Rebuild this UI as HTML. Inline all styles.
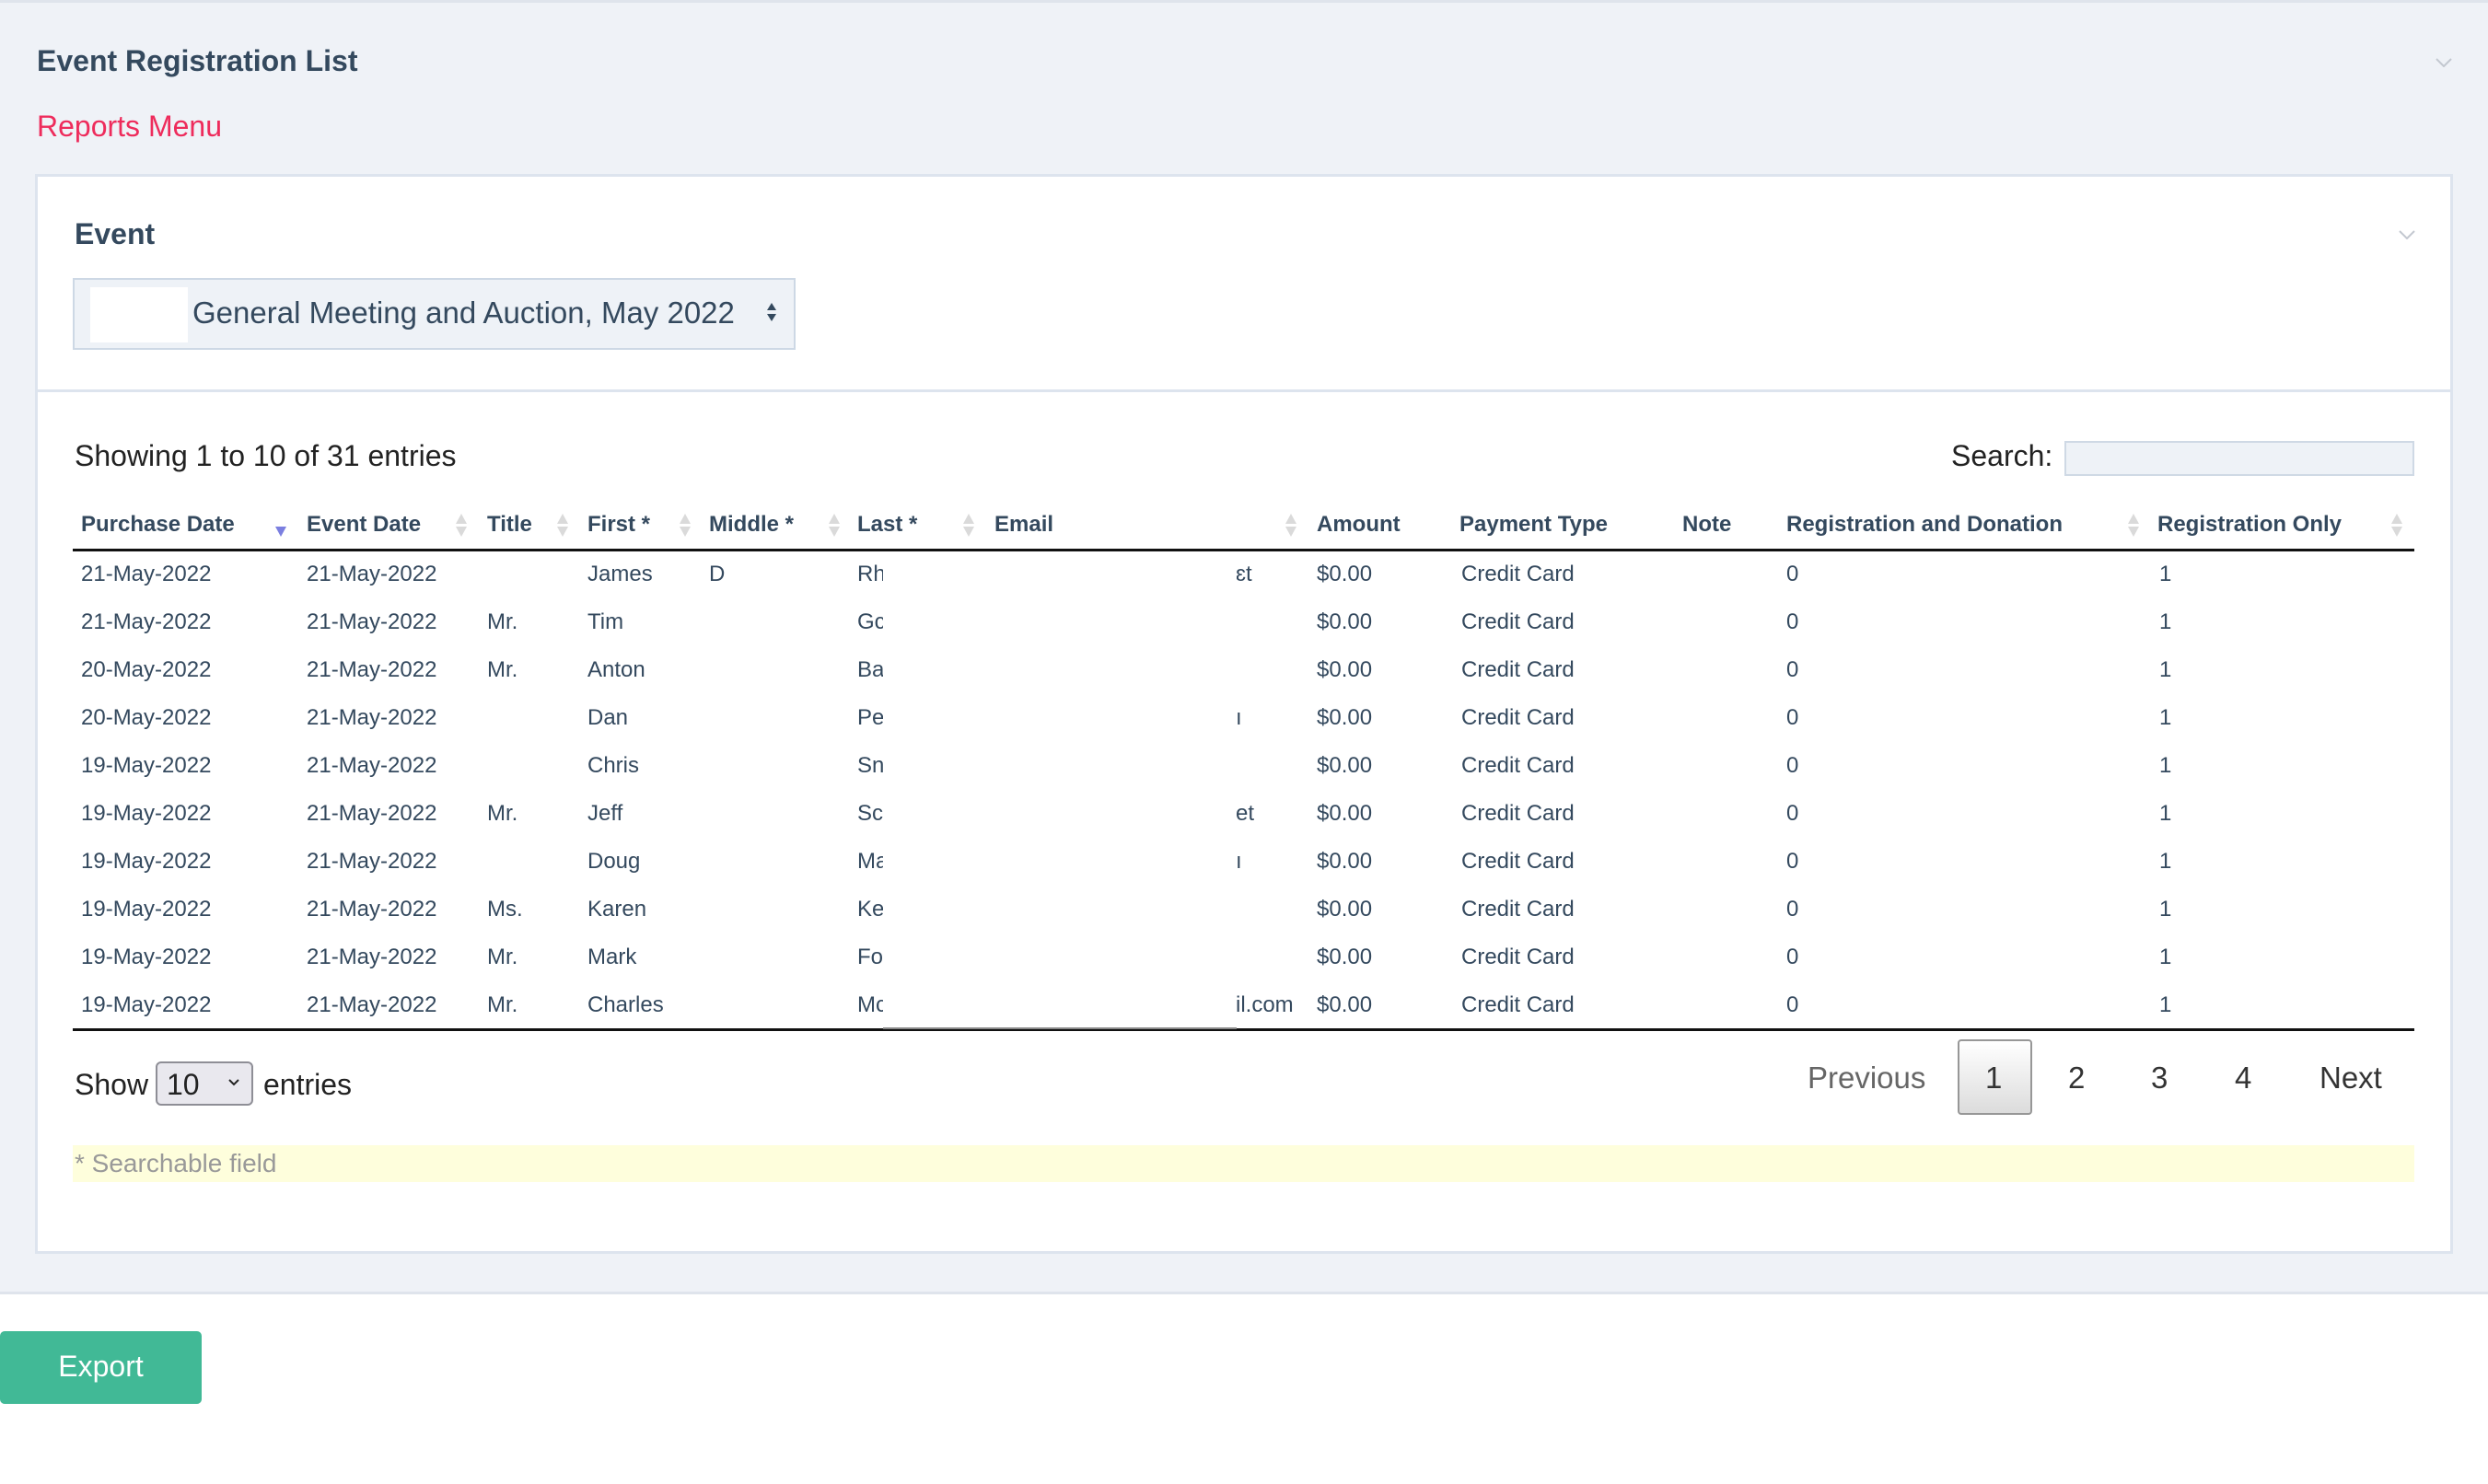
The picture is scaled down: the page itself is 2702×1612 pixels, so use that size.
<!DOCTYPE html>
<html><head><meta charset="utf-8"><style>
*{margin:0;padding:0;box-sizing:border-box}
body{width:2702px;height:1612px;background:#fff;font-family:"Liberation Sans",sans-serif;position:relative;overflow:hidden;color:#34495e}
.a{position:absolute;white-space:nowrap}
.bg{position:absolute;left:0;top:0;width:2702px;height:1406px;background:#eff2f7;border-top:3px solid #dfe4ec;border-bottom:3px solid #dfe4ec}
.card{position:absolute;left:38px;top:189px;width:2626px;height:1173px;background:#fff;border:3px solid #dde4ee}
.th{position:absolute;top:556px;font-weight:bold;font-size:24px;color:#34495e}
.td{position:absolute;font-size:24px;color:#34495e}
.sort{position:absolute;top:556px;width:14px;height:30px}
.chev{position:absolute;width:18px;height:10px}
</style></head><body>
<div class="bg"></div>
<div class="a" style="left:40px;top:48px;font-size:32px;font-weight:bold;color:#34495e">Event Registration List</div>
<svg class="chev" style="left:2645px;top:63px" viewBox="0 0 18 10"><path d="M1 1 L9 9 L17 1" fill="none" stroke="#c3c8d0" stroke-width="2"/></svg>
<div class="a" style="left:40px;top:119px;font-size:32px;color:#ee2c5c">Reports Menu</div>
<div class="card"></div>
<div class="a" style="left:81px;top:236px;font-size:32px;font-weight:bold;color:#34495e">Event</div>
<svg class="chev" style="left:2605px;top:250px" viewBox="0 0 18 10"><path d="M1 1 L9 9 L17 1" fill="none" stroke="#c3c8d0" stroke-width="2"/></svg>
<div class="a" style="left:79px;top:302px;width:785px;height:78px;background:#eef2f7;border:2px solid #cdd8e5"></div>
<div class="a" style="left:98px;top:312px;width:106px;height:60px;background:#fff"></div>
<div class="a" style="left:209px;top:321px;font-size:33px;color:#34495e">General Meeting and Auction, May 2022</div>
<svg class="a" style="left:832px;top:327px" width="12" height="24" viewBox="0 0 12 24"><path d="M6 2 L11 10 L1 10Z M6 22 L11 14 L1 14Z" fill="#34495e"/></svg>
<div class="a" style="left:41px;top:423px;width:2620px;height:3px;background:#dde4ee"></div>
<div class="a" style="left:81px;top:477px;font-size:32px;color:#222">Showing 1 to 10 of 31 entries</div>
<div class="a" style="left:2119px;top:477px;font-size:32px;color:#222">Search:</div>
<div class="a" style="left:2242px;top:479px;width:380px;height:38px;background:#eef2f7;border:2px solid #cfd9e5"></div>

<div class="th" style="left:88px">Purchase Date</div>
<div class="th" style="left:333px">Event Date</div>
<div class="th" style="left:529px">Title</div>
<div class="th" style="left:638px">First *</div>
<div class="th" style="left:770px">Middle *</div>
<div class="th" style="left:931px">Last *</div>
<div class="th" style="left:1080px">Email</div>
<div class="th" style="left:1430px">Amount</div>
<div class="th" style="left:1585px">Payment Type</div>
<div class="th" style="left:1827px">Note</div>
<div class="th" style="left:1940px">Registration and Donation</div>
<div class="th" style="left:2343px">Registration Only</div>
<svg class="sort" style="left:298px" viewBox="0 0 14 30"><path d="M1 16 L13 16 L7 27Z" fill="#7b7fe0"/></svg>
<svg class="sort" style="left:494px" viewBox="0 0 14 30"><path d="M7 2 L13 13 L1 13Z M1 16 L13 16 L7 27Z" fill="#dadada"/></svg>
<svg class="sort" style="left:604px" viewBox="0 0 14 30"><path d="M7 2 L13 13 L1 13Z M1 16 L13 16 L7 27Z" fill="#dadada"/></svg>
<svg class="sort" style="left:737px" viewBox="0 0 14 30"><path d="M7 2 L13 13 L1 13Z M1 16 L13 16 L7 27Z" fill="#dadada"/></svg>
<svg class="sort" style="left:899px" viewBox="0 0 14 30"><path d="M7 2 L13 13 L1 13Z M1 16 L13 16 L7 27Z" fill="#dadada"/></svg>
<svg class="sort" style="left:1045px" viewBox="0 0 14 30"><path d="M7 2 L13 13 L1 13Z M1 16 L13 16 L7 27Z" fill="#dadada"/></svg>
<svg class="sort" style="left:1395px" viewBox="0 0 14 30"><path d="M7 2 L13 13 L1 13Z M1 16 L13 16 L7 27Z" fill="#dadada"/></svg>
<svg class="sort" style="left:2310px" viewBox="0 0 14 30"><path d="M7 2 L13 13 L1 13Z M1 16 L13 16 L7 27Z" fill="#dadada"/></svg>
<svg class="sort" style="left:2596px" viewBox="0 0 14 30"><path d="M7 2 L13 13 L1 13Z M1 16 L13 16 L7 27Z" fill="#dadada"/></svg>
<div class="a" style="left:79px;top:596px;width:2543px;height:3px;background:#111"></div>

<div id="rows"></div>
<div class="a" style="left:79px;top:1117px;width:2543px;height:3px;background:#111"></div>
<div class="a" style="left:959px;top:600px;width:384px;height:518px;background:#fff;border-bottom:2px solid #888"></div>

<div class="a" style="left:81px;top:1160px;font-size:32px;color:#222">Show</div>
<div class="a" style="left:169px;top:1153px;width:106px;height:48px;background:#e9e8ee;border:2px solid #8e8e96;border-radius:6px"></div>
<div class="a" style="left:181px;top:1160px;font-size:32px;color:#222">10</div>
<svg class="a" style="left:248px;top:1172px" width="12" height="8" viewBox="0 0 12 8"><path d="M1 1 L6 6 L11 1" fill="none" stroke="#222" stroke-width="2"/></svg>
<div class="a" style="left:286px;top:1160px;font-size:32px;color:#222">entries</div>

<div class="a" style="left:1963px;top:1152px;font-size:33px;color:#666">Previous</div>
<div class="a" style="left:2126px;top:1129px;width:81px;height:82px;border:2px solid #979797;border-radius:4px;background:linear-gradient(#fff,#dcdcdc)"></div>
<div class="a" style="left:2156px;top:1152px;font-size:33px;color:#333">1</div>
<div class="a" style="left:2246px;top:1152px;font-size:33px;color:#333">2</div>
<div class="a" style="left:2336px;top:1152px;font-size:33px;color:#333">3</div>
<div class="a" style="left:2427px;top:1152px;font-size:33px;color:#333">4</div>
<div class="a" style="left:2519px;top:1152px;font-size:33px;color:#333">Next</div>

<div class="a" style="left:79px;top:1244px;width:2543px;height:40px;background:#fefedc"></div>
<div class="a" style="left:81px;top:1248px;font-size:28px;color:#999">* Searchable field</div>

<div class="a" style="left:0;top:1446px;width:219px;height:79px;background:#41b996;border-radius:5px"></div>
<div class="a" style="left:0;top:1466px;width:219px;text-align:center;font-size:32px;color:#fff">Export</div>

<script>
var d=[["21-May-2022","","James","D","Rh","\u025bt"],["21-May-2022","Mr.","Tim","","Gc",""],["20-May-2022","Mr.","Anton","","Ba",""],["20-May-2022","","Dan","","Pe","\u0131"],["19-May-2022","","Chris","","Sn",""],["19-May-2022","Mr.","Jeff","","Sc","et"],["19-May-2022","","Doug","","Ma","\u0131"],["19-May-2022","Ms.","Karen","","Ke",""],["19-May-2022","Mr.","Mark","","Fo",""],["19-May-2022","Mr.","Charles","","Mc","il.com"]];
var h="";
d.forEach(function(r,i){var t=610+i*52;
function c(x,s){h+='<div class="td" style="left:'+x+'px;top:'+t+'px">'+s+'</div>';}
c(88,r[0]);c(333,"21-May-2022");c(529,r[1]);c(638,r[2]);c(770,r[3]);c(931,r[4]);c(1342,r[5]);c(1430,"$0.00");c(1587,"Credit Card");c(1940,"0");c(2345,"1");});
document.getElementById("rows").outerHTML=h;
</script>
</body></html>
